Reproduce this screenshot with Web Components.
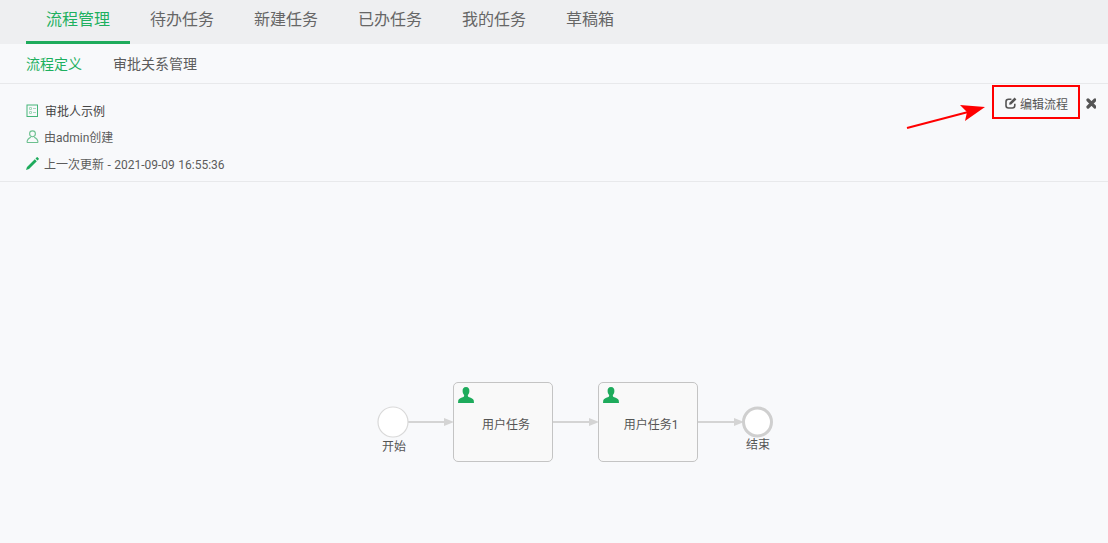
<!DOCTYPE html>
<html lang="zh-CN">
<head>
  <meta charset="UTF-8">
  <title>流程管理</title>
  <style>
    html, body { margin: 0; height: 100%; }
    body {
      background: #f8f9fb;
      color: #555;
      font: 12px Roboto, "Noto Sans CJK SC", sans-serif;
      overflow: hidden;
    }
  </style>
</head>
<body>

<template id="main-tabs-template">
  <style>
    :host { display: flex; height: 44px; padding-left: 26px; background: #eeeff1; }
  </style>
  <slot></slot>
</template>

<template id="main-tab-template">
  <style>
    :host {
      display: block;
      box-sizing: border-box;
      height: 44px;
      padding: 0 20px;
      font-size: 16px;
      line-height: 40px;
      color: #666;
    }
    :host([active]) { color: #1eb05f; border-bottom: 3px solid #1eab5c; }
  </style>
  <slot></slot>
</template>

<template id="sub-tabs-template">
  <style>
    :host {
      display: flex;
      gap: 31px;
      box-sizing: border-box;
      height: 40px;
      padding-left: 26px;
      border-bottom: 1px solid #e8e9eb;
      font-size: 14px;
      line-height: 41px;
      color: #5c5c5c;
    }
    ::slotted([active]) { color: #1eb05f; }
  </style>
  <slot></slot>
</template>

<template id="info-panel-template">
  <style>
    :host {
      display: flex;
      justify-content: space-between;
      box-sizing: border-box;
      height: 98px;
      border-bottom: 1px solid #e8e9eb;
    }
    .rows { display: flex; flex-direction: column; padding: 13px 0 0 26px; }
    .actions { display: flex; align-items: flex-start; padding: 1px 12px 0 0; gap: 5px; position: relative; }
    .arrow { position: absolute; left: -90px; top: 16px; }
    .edit {
      display: flex;
      align-items: center;
      gap: 3px;
      box-sizing: border-box;
      width: 88px;
      height: 34px;
      padding: 2px 0 0 11px;
      border: 2px solid #f00;
      color: #555;
    }
    .close { margin-top: 13px; display: block; }
  </style>
  <div class="rows"><slot></slot></div>
  <div class="actions">
    <svg class="arrow" width="90" height="40" viewBox="0 0 90 40">
      <path d="M5 28 L70 11" stroke="#f00" stroke-width="2" fill="none"/>
      <path d="M83 7 L58 5 L65 12 L63 21 Z" fill="#f00"/>
    </svg>
    <div class="edit">
      <svg width="12" height="12" viewBox="0 0 12 12" fill="none">
        <path d="M9.800 6.800 V8.500 A2.500 2.500 0 0 1 7.300 11 H3.500 A2.500 2.500 0 0 1 1 8.500 V4.700 A2.500 2.500 0 0 1 3.500 2.200 H6.400" stroke="#555" stroke-width="1.600"/>
        <path d="M4.400 5.800 L9.600 .6 L11.400 2.400 L6.200 7.600 L4.200 7.800 Z" fill="#555"/>
      </svg>
      <span>编辑流程</span>
    </div>
    <svg class="close" width="11" height="11" viewBox="-1 0 11 11">
      <path d="M2 2 L9 9 M9 2 L2 9" stroke="#555" stroke-width="3.200" stroke-linecap="round"/>
    </svg>
  </div>
</template>

<template id="info-row-template">
  <style>
    :host { display: flex; align-items: center; gap: 5px; height: 26px; color: #5c5c5c; word-spacing: .5px; }
    :host([dark]) { gap: 6px; color: #444; }
    :host(:last-child) { margin-top: 1px; }
    ::slotted(svg) { width: 13px; height: 13px; flex: none; }
  </style>
  <slot name="icon"></slot>
  <span><slot></slot></span>
</template>

<template id="flow-canvas-template">
  <style>
    :host { display: block; position: relative; height: 361px; }
    svg { position: absolute; left: 0; top: 0; }
  </style>
  <svg width="1108" height="361" viewBox="0 182 1108 361" fill="none">
    <g stroke="#d4d4d4" stroke-width="2">
      <path d="M408 422 H446"/>
      <path d="M553 422 H590"/>
      <path d="M698 422 H735"/>
    </g>
    <g fill="#d4d4d4">
      <path d="M444 418 L454 422 L444 426 Z"/>
      <path d="M589 418 L599 422 L589 426 Z"/>
      <path d="M734 418 L744 422 L734 426 Z"/>
    </g>
    <circle cx="393" cy="422" r="15" fill="#fff" stroke="#d9d9d9" stroke-width="1.200"/>
    <circle cx="757.500" cy="422" r="14" fill="#fff" stroke="#cfcfcf" stroke-width="3"/>
  </svg>
  <slot></slot>
</template>

<template id="flow-task-template">
  <style>
    :host {
      position: absolute;
      top: 200px;
      box-sizing: border-box;
      width: 100px;
      height: 80px;
      border: 1px solid #c4c4c4;
      border-radius: 5px;
      background: #f9f9f9;
      color: #555;
    }
    svg { position: absolute; left: 4px; top: 4px; }
    .name { position: absolute; left: 6px; right: 0; top: 33px; text-align: center; line-height: 18px; }
  </style>
  <svg width="16" height="16" viewBox="0 0 17 17">
    <path fill="#1eab5c" d="M8.500 0 C5.900 0 4.700 2 4.900 4.400 C5 6.300 5.700 7.500 6.500 8.400 C6.700 9.600 6.200 10.300 5 10.900 C3 11.800 .8 12.500 .3 14.200 L0 17 H17 L16.700 14.200 C16.200 12.500 14 11.800 12 10.900 C10.800 10.300 10.300 9.600 10.500 8.400 C11.300 7.500 12 6.300 12.100 4.400 C12.300 2 11.100 0 8.500 0 Z"/>
  </svg>
  <div class="name"><slot></slot></div>
</template>

<template id="flow-label-template">
  <style>
    :host { position: absolute; width: 40px; text-align: center; line-height: 18px; color: #555; }
  </style>
  <slot></slot>
</template>

<main-tabs>
  <main-tab active>流程管理</main-tab>
  <main-tab>待办任务</main-tab>
  <main-tab>新建任务</main-tab>
  <main-tab>已办任务</main-tab>
  <main-tab>我的任务</main-tab>
  <main-tab>草稿箱</main-tab>
</main-tabs>

<sub-tabs>
  <span active>流程定义</span>
  <span>审批关系管理</span>
</sub-tabs>

<info-panel>
  <info-row dark>
    <svg slot="icon" viewBox="0 0 13 13" fill="none">
      <rect x="1" y="1" width="10.500" height="11.500" stroke="#45b578"/>
      <path d="M3.500 3.500 H5.500 V5.500 H3.500 Z M3.500 7.500 H5.500 V9.500 H3.500 Z M7 4.500 H10 M7 8.500 H10" stroke="#a5d8bb"/>
    </svg>
    审批人示例
  </info-row>
  <info-row>
    <svg slot="icon" viewBox="0 0 13 13" fill="none" stroke="#6cc08f" stroke-width="1.100">
      <circle cx="6.500" cy="3.800" r="2.900"/>
      <path d="M1 12.500 C1 9.500 3 8 4.800 7.200 M12 12.500 C12 9.500 10 8 8.200 7.200 M1 12.500 H12"/>
    </svg>
    由admin创建
  </info-row>
  <info-row>
    <svg slot="icon" viewBox="0 0 13 13">
      <path fill="#1eab5c" d="M0 13 L1 10 L8.800 2.200 L10.800 4.200 L3 12 Z M9.500 1.500 L10.800 .2 C11 0 11.300 0 11.500 .2 L12.800 1.500 C13 1.700 13 2 12.800 2.200 L11.500 3.500 Z"/>
    </svg>
    上一次更新 - 2021-09-09 16:55:36
  </info-row>
</info-panel>

<flow-canvas>
  <flow-task style="left:453px">用户任务</flow-task>
  <flow-task style="left:598px">用户任务1</flow-task>
  <flow-label style="left:374px;top:256px">开始</flow-label>
  <flow-label style="left:738px;top:254px">结束</flow-label>
</flow-canvas>

<script>
  // Every element just clones its template into an open shadow root
  function defineFromTemplate(tag, templateId) {
    customElements.define(tag, class extends HTMLElement {
      constructor() {
        super();
        this.attachShadow({ mode: 'open' });
        const template = document.getElementById(templateId);
        this.shadowRoot.appendChild(template.content.cloneNode(true));
      }
    });
  }

  defineFromTemplate('main-tabs', 'main-tabs-template');
  defineFromTemplate('main-tab', 'main-tab-template');
  defineFromTemplate('sub-tabs', 'sub-tabs-template');
  defineFromTemplate('info-panel', 'info-panel-template');
  defineFromTemplate('info-row', 'info-row-template');
  defineFromTemplate('flow-canvas', 'flow-canvas-template');
  defineFromTemplate('flow-task', 'flow-task-template');
  defineFromTemplate('flow-label', 'flow-label-template');
</script>
</body>
</html>
